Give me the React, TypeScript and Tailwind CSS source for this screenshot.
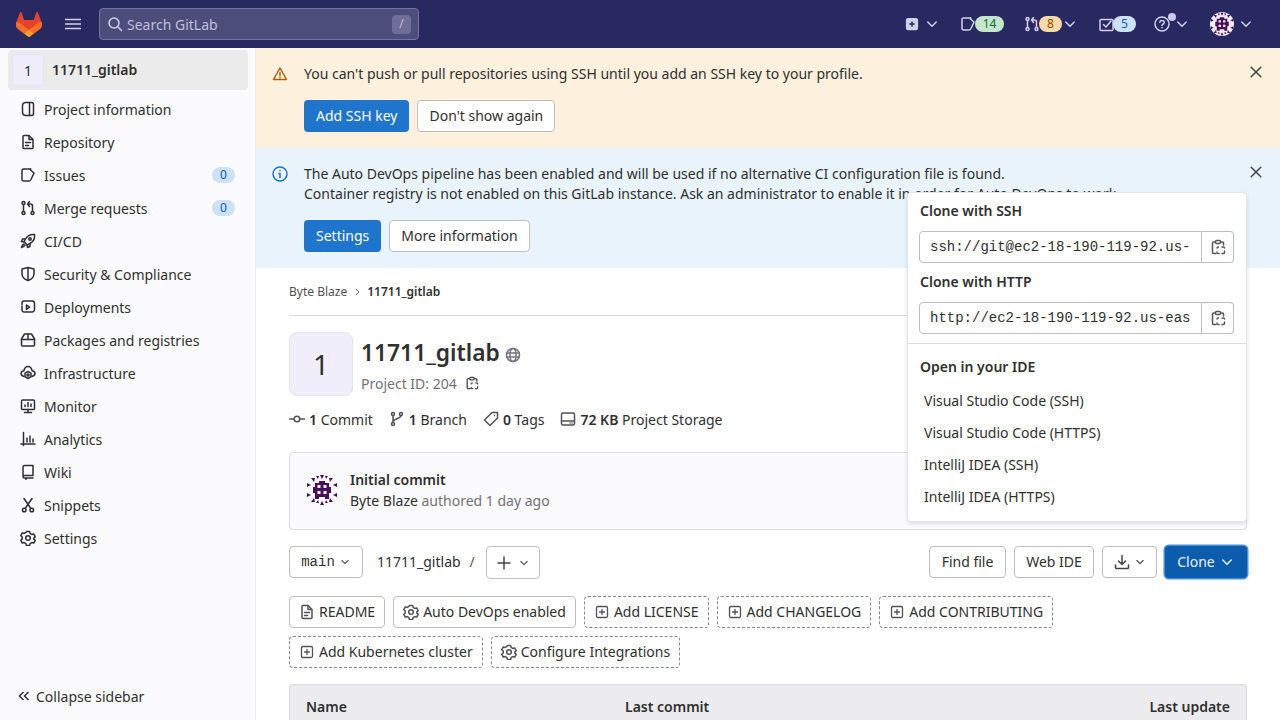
import React from "react";

type P = { className?: string };
const S = ({ className = "", children, fill }: P & { children: React.ReactNode; fill?: boolean }) => (
  <svg viewBox="0 0 16 16" fill={fill ? "currentColor" : "none"} stroke={fill ? "none" : "currentColor"} strokeWidth={1.5} strokeLinecap="round" strokeLinejoin="round" className={`shrink-0 ${className || "w-4 h-4"}`}>
    {children}
  </svg>
);

const Chevron = ({ className = "w-4 h-4" }: P) => <S className={className}><path d="M3.800 6 8 10.200 12.200 6" /></S>;
const Close = ({ className = "w-4 h-4" }: P) => <S className={className}><path d="M3.200 3.200l9.600 9.600M12.800 3.200l-9.600 9.600" /></S>;
const ProjectIc = () => <S><path d="M6 1.500h5.500a2 2 0 0 1 2 2v9a2 2 0 0 1-2 2H6c-2 0-3.500-1.500-3.500-3.200V4.700C2.500 3 4 1.500 6 1.500Z" /><path d="M9.500 2v12" /></S>;
const DocIc = ({ className }: P) => <S className={className}><path d="M3 2.500a1 1 0 0 1 1-1h5l4 4v8a1 1 0 0 1-1 1H4a1 1 0 0 1-1-1Z" /><path d="M9 2v3.500h3.500M5.500 8.500h5M5.500 11.500h3" /></S>;
const IssueIc = ({ className }: P) => <S className={className}><path d="M10.500 2H3.500a1.500 1.500 0 0 0-1.500 1.500v9A1.500 1.500 0 0 0 3.500 14h5.500c1 0 1.500-.5 2-1.500l3-6.500-3.500-3Z" /><path d="M10.500 2v.5" /></S>;
const MergeIc = ({ className }: P) => <S className={className}><circle cx="3.500" cy="3" r="1.500" /><circle cx="3.500" cy="13" r="1.500" /><circle cx="12.500" cy="13" r="1.500" /><path d="M3.500 4.500v7M12.500 11.500V6a2 2 0 0 0-2-2H8M9.500 1.500 7.500 4l2 2.500" /></S>;
const RocketIc = () => <S><path d="M14.500 1.500c-4-.5-7 1-9 4.500L4 8.500 7.500 12l2.500-1.500c3.500-2 5-5 4.500-9Z" /><circle cx="10" cy="6" r="1.200" /><path d="M5 6H2.500L1.500 8.500 4 9M10 11v2.500L7.500 14.500 7 12M4 11c-1.500.5-2 1.500-2.500 3.500 2-.5 3-1 3.500-2.500" /></S>;
const ShieldIc = () => <S><path d="M8 1.500 2 3v4.500c0 3.500 2.500 6 6 7 3.500-1 6-3.500 6-7V3Z" /><path d="M8 2v12" /></S>;
const DeployIc = () => <S><path d="M2 6V4a2 2 0 0 1 2-2h8a2.500 2.500 0 0 1 2.500 2.500v6a2.500 2.500 0 0 1-2.500 2.500H4a2 2 0 0 1-2-1.500" /><path d="M2 7.500v3" /><path d="M6.500 6 9.500 8.200 6.500 10.500Z" /></S>;
const PackageIc = () => <S><path d="M1.500 7 4.500 2h7l3 5v6a1 1 0 0 1-1 1h-11a1 1 0 0 1-1-1Z" /><path d="M1.500 7.500h13M8 2v5.500" /></S>;
const InfraIc = () => <S><path d="M4 5.500C4.500 3 6 1.500 8 1.500S11.500 3 12 5.500c1.500.5 3 1.500 3 3s-1.500 2.500-3 3M4 11.500c-1.500-.5-3-1.500-3-3s1.500-2.500 3-3" /><path d="M8 6.500l3 1.700v3.400l-3 1.900-3-1.900V8.200Z" /><circle cx="8" cy="10" r="1" /></S>;
const MonitorIc = () => <S><rect x="1.500" y="2" width="13" height="9.500" rx="1" /><path d="M8 11.500V14M4.500 14.500h7M5 8.500V7M8 8.500V4.500M11 8.500V6" /></S>;
const AnalyticsIc = () => <S><path d="M3.500 1.500v13M1 13h14M7 11V7M10 11V5M13 11V8" /></S>;
const WikiIc = () => <S><path d="M3 12.500V3a1.500 1.500 0 0 1 1.500-1.500H13v10H4.500C3.500 11.500 3 12 3 12.500Zm0 0c0 1 .5 1.500 1.500 1.500H13M6 14v1.500" /></S>;
const SnippetIc = () => <S><path d="M4 1.500 10.500 11M12 1.500 5.500 11" /><circle cx="4.200" cy="13" r="1.800" /><circle cx="11.800" cy="13" r="1.800" /></S>;
const GearIc = ({ className }: P) => <S className={className}><path d="M6.400 1.500h3.200l.5 1.900 1.700 1 1.900-.5 1.500 2.700-1.400 1.400v1l1.400 1.400-1.500 2.700-1.900-.5-1.700 1-.5 1.900H6.400l-.5-1.900-1.700-1-1.900.5L.8 10.400l1.400-1.400v-2L.8 5.600l1.500-2.700 1.900.5 1.700-1Z" /><circle cx="8" cy="8" r="2.300" /></S>;
const CopyIc = ({ className = "w-4 h-4" }: P) => <S className={className}><path d="M4.500 3H3.500A1 1 0 0 0 2.500 4v9.500a1 1 0 0 0 1 1H6M11.500 3h1a1 1 0 0 1 1 1v2" /><rect x="5.500" y="1.500" width="5" height="3" rx="1" /><path d="M8.500 8h-.5a1 1 0 0 0-1 1M12 8h1.500a1 1 0 0 1 1 1M14.500 12v1.500a1 1 0 0 1-1 1H12M9 14.500H8a1 1 0 0 1-1-1V13" strokeWidth={1.4} /></S>;
const AddBoxIc = () => <S className="w-4 h-4 text-[#535158]"><rect x="2.500" y="2.500" width="11" height="11" rx="1.500" strokeWidth={1.3} /><path d="M8 5.500v5M5.500 8h5" strokeWidth={1.3} /></S>;

function Identicon({ className }: P) {
  const c = "#4a0f5c";
  return (
    <svg viewBox="0 0 32 32" className={className}>
      <path d="M9 9h4V7h6v2h4v4h2v6h-2v6h-4v-2h-6v2H9v-6H7v-6h2Z" fill={c} />
      <rect x="11.500" y="11" width="3" height="3" fill="#fff" /><rect x="17.500" y="11" width="3" height="3" fill="#fff" />
      <rect x="11.500" y="17" width="3" height="3" fill="#fff" /><rect x="17.500" y="17" width="3" height="3" fill="#fff" />
      <path d="M5 4h4l-1 4ZM27 4h-4l1 4ZM5 28h4l-1-4ZM27 28h-4l1-4ZM14 1h4l-2 4ZM14 31h4l-2-4ZM1 9l4 2-4 2ZM31 9l-4 2 4 2ZM1 19l4 2-4 2ZM31 19l-4 2 4 2ZM10 2h3l-1 3ZM22 2h-3l1 3ZM10 29h3l-1-3ZM22 29h-3l1-3Z" fill={c} />
    </svg>
  );
}

const nav: [string, React.ReactNode, number?][] = [
  ["Project information", <ProjectIc />],
  ["Repository", <DocIc />],
  ["Issues", <IssueIc />, 0],
  ["Merge requests", <MergeIc />, 0],
  ["CI/CD", <RocketIc />],
  ["Security & Compliance", <ShieldIc />],
  ["Deployments", <DeployIc />],
  ["Packages and registries", <PackageIc />],
  ["Infrastructure", <InfraIc />],
  ["Monitor", <MonitorIc />],
  ["Analytics", <AnalyticsIc />],
  ["Wiki", <WikiIc />],
  ["Snippets", <SnippetIc />],
  ["Settings", <GearIc />],
];

function Sidebar() {
  return (
    <aside className="w-[256px] shrink-0 h-[672px] bg-[#fbfafd] border-r border-[#ececef] flex flex-col pl-2 pr-[7px] pt-[2px] text-[14px] text-[#303030]">
      <div className="h-10 rounded bg-[#ebebeb] flex items-center px-1 mb-[3px]">
        <div className="w-8 h-8 rounded bg-[#f0eefa] border border-[#e6e4f2] flex items-center justify-center text-[14px] text-[#303030]">1</div>
        <span className="ml-2 pb-[2px] font-semibold">11711_gitlab</span>
      </div>
      {nav.map(([label, icon, count]) => (
        <div key={label} className="h-8 mb-[1px] flex items-center pl-3 pr-[13px]">
          {icon}
          <span className="ml-2 flex-1">{label}</span>
          {count !== undefined && <span className="w-[23px] h-4 rounded-full bg-[#cbe2f9] text-[#0b5cad] text-[12px] flex items-center justify-center">{count}</span>}
        </div>
      ))}
      <div className="mt-auto h-12 flex items-center pl-2 text-[#303030]">
        <svg viewBox="0 0 16 16" className="w-4 h-4 mr-1" fill="none" stroke="currentColor" strokeWidth={1.5}><path d="M7.500 4 3.500 8l4 4M12.500 4l-4 4 4 4" /></svg>
        <span>Collapse sidebar</span>
      </div>
    </aside>
  );
}

function Btn({ children, primary, className = "" }: { children: React.ReactNode; primary?: boolean; className?: string }) {
  return (
    <div className={`h-8 rounded flex items-center justify-center text-[14px] whitespace-nowrap ${primary ? "px-3 bg-[#1f75cb] text-white" : "px-[11px] bg-white text-[#303030] border border-[#bfbfc3]"} ${className}`}>
      {children}
    </div>
  );
}

function Alert({ bg, icon, close, lines, actions, className }: { bg: string; icon: React.ReactNode; close?: boolean; lines: string[]; actions: React.ReactNode; className: string }) {
  return (
    <div className={`flex pl-4 pr-4 ${bg} ${className}`}>
      <div className="w-8 pt-[2px]">{icon}</div>
      <div className="flex-1 min-w-0 text-[14px] leading-5 text-[#303030]">
        {lines.map((l) => <div key={l} className="whitespace-nowrap">{l}</div>)}
        <div className="flex gap-2 mt-4">{actions}</div>
      </div>
      {close && <Close className="w-4 h-4 text-[#444]" />}
    </div>
  );
}

function ActionPill({ icon, label, dashed }: { icon: React.ReactNode; label: string; dashed?: boolean }) {
  return (
    <div className={`h-8 px-[9px] pb-[1px] rounded flex items-center gap-1 text-[14px] text-[#303030] whitespace-nowrap border ${dashed ? "border-dashed border-[#89888d]" : "border-[#bfbfc3]"}`}>
      {icon}
      <span>{label}</span>
    </div>
  );
}

function CloneField({ value }: { value: string }) {
  return (
    <div className="h-8 flex ml-[11px] mr-3">
      <div className="flex-1 min-w-0 border border-[#bfbfc3] rounded-l pl-[10px] pr-[10px] flex items-center">
        <div className="overflow-hidden whitespace-nowrap font-['Liberation_Mono',monospace] text-[14px] text-[#303030]">{value}</div>
      </div>
      <div className="w-8 border border-l-0 border-[#bfbfc3] rounded-r flex items-center justify-center text-[#555]"><CopyIc /></div>
    </div>
  );
}

function CloneMenu() {
  return (
    <div className="absolute right-0 bottom-full mb-[24px] w-[340px] h-[330px] bg-white border border-[#e5e5e8] rounded shadow-[0_2px_4px_rgba(0,0,0,0.12)] text-[14px] text-[#303030] z-10 flex flex-col">
      <div className="font-semibold px-3 pt-[8px] h-[38px] leading-5">Clone with SSH</div>
      <CloneField value="ssh://git@ec2-18-190-119-92.us-east-2.compute" />
      <div className="font-semibold px-3 pt-[9px] h-[39px] leading-5">Clone with HTTP</div>
      <CloneField value="http://ec2-18-190-119-92.us-east-2.compute" />
      <div className="h-px bg-[#dcdcde] mt-[9px]" />
      <div className="font-semibold px-3 pt-[13px] h-[40px] leading-5">Open in your IDE</div>
      {["Visual Studio Code (SSH)", "Visual Studio Code (HTTPS)", "IntelliJ IDEA (SSH)", "IntelliJ IDEA (HTTPS)"].map((t) => (
        <div key={t} className="h-8 px-4 flex items-center">{t}</div>
      ))}
    </div>
  );
}

function Header() {
  return (
    <header className="h-12 bg-[#292961] flex items-center text-[#d1d0e8] shrink-0">
      <svg viewBox="0 0 25 24" className="w-[26px] h-[25px] ml-4">
        <path d="m24.507 9.5-.034-.09L21.082.562a.896.896 0 0 0-1.694.091l-2.29 7.01H7.825L5.535.653a.898.898 0 0 0-1.694-.09L.451 9.411.416 9.5a6.297 6.297 0 0 0 2.09 7.278l.012.01.03.022 5.16 3.867 2.56 1.935 1.554 1.176a1.051 1.051 0 0 0 1.268 0l1.555-1.176 2.56-1.935 5.197-3.89.014-.01A6.297 6.297 0 0 0 24.507 9.5Z" fill="#e24329" />
        <path d="m24.507 9.5-.034-.09a11.44 11.44 0 0 0-4.56 2.051l-7.447 5.632 4.742 3.584 5.197-3.89.014-.01A6.297 6.297 0 0 0 24.507 9.5Z" fill="#fc6d26" />
        <path d="m7.707 20.677 2.56 1.935 1.555 1.176a1.051 1.051 0 0 0 1.268 0l1.555-1.176 2.56-1.935-4.743-3.584-4.755 3.584Z" fill="#fca326" />
        <path d="M5.01 11.461a11.43 11.43 0 0 0-4.56-2.05L.416 9.5a6.297 6.297 0 0 0 2.09 7.278l.012.01.03.022 5.16 3.867 4.745-3.584-7.444-5.632Z" fill="#fc6d26" />
      </svg>
      <svg viewBox="0 0 16 16" className="w-4 h-4 ml-[23px]" fill="none" stroke="currentColor" strokeWidth={1.5}><path d="M0 3.500h16M0 8h16M0 12.500h16" /></svg>
      <div className="ml-[18px] w-[320px] h-8 rounded bg-[#4d4d7b] border border-[#7473a0] flex items-center pl-[7px] pr-[7px] text-[14px]">
        <S className="w-4 h-4 text-[#d1d0e8]"><circle cx="7" cy="7" r="5" /><path d="m11 11 3.500 3.500" /></S>
        <span className="ml-[4px] text-[#c0bfdc] flex-1">Search GitLab</span>
        <span className="w-[19px] h-[19px] rounded-sm bg-[#6e6e96] text-[#c0bfdc] text-[12px] flex items-center justify-center">/</span>
      </div>
      <div className="ml-auto flex items-center pr-[26px]">
        <svg viewBox="0 0 16 16" className="w-[14px] h-[14px]"><rect width="14" height="14" x="1" y="1" rx="2.500" fill="#d1d0e8" /><path d="M8 5v6M5 8h6" stroke="#292961" strokeWidth={1.800} /></svg>
        <Chevron className="w-4 h-4 ml-[5px]" />
        <IssueIc className="w-4 h-4 ml-[20px]" />
        <span className="w-[29px] h-4 -ml-px rounded-full bg-[#c3e6cd] text-[#24663b] text-[12px] flex items-center justify-center">14</span>
        <MergeIc className="w-4 h-4 ml-[20px]" />
        <span className="w-[23px] h-4 -ml-px rounded-full bg-[#f5d9a8] text-[#8f4700] text-[12px] flex items-center justify-center">8</span>
        <Chevron className="w-4 h-4" />
        <S className="w-4 h-4 ml-[20px]"><path d="M14 3.500H3a1 1 0 0 0-1 1v9a1 1 0 0 0 1 1h11a1 1 0 0 0 1-1V4" /><path d="m5.500 8.500 2.500 2.500 5-6" /></S>
        <span className="w-[23px] h-4 -ml-px rounded-full bg-[#cbe2f9] text-[#0b5cad] text-[12px] flex items-center justify-center">5</span>
        <span className="relative ml-[18px] w-4 h-4">
          <S className="w-4 h-4"><circle cx="8" cy="8" r="7" /><path d="M5.800 6.200A2.200 2.200 0 0 1 8 4.500c1.300 0 2.200.8 2.200 1.900 0 1.600-2.200 1.800-2.200 3.200" /><path d="M8 11.500v.2" /></S>
          <span className="absolute -top-[3px] -right-[6px] w-2 h-2 rounded-full bg-[#c9c8ef]" />
        </span>
        <Chevron className="w-4 h-4 ml-1" />
        <span className="ml-[20px] w-6 h-6 rounded-full bg-[#f3eef6] overflow-hidden"><Identicon className="w-6 h-6" /></span>
        <Chevron className="w-4 h-4 ml-1" />
      </div>
    </header>
  );
}

function Main() {
  return (
    <main className="flex-1 min-w-0 h-[672px] overflow-hidden bg-white">
      <Alert
        bg="bg-[#fdf1dd]"
        className="h-[100px] pt-[16px]"
        close
        icon={<S className="w-4 h-4 text-[#ab6100]"><path d="M8 2 1.500 13.500h13Z" /><path d="M8 6.500v3.500M8 11.800v.2" /></S>}
        lines={["You can't push or pull repositories using SSH until you add an SSH key to your profile."]}
        actions={<><Btn primary>Add SSH key</Btn><Btn>Don't show again</Btn></>}
      />
      <Alert
        bg="bg-[#e9f3fc]"
        className="h-[120px] pt-[16px]"
        close
        icon={<S className="w-4 h-4 text-[#1f75cb]"><circle cx="8" cy="8" r="7" /><path d="M8 7.500v4M6.800 7.500H8M8 4.500v.2" /></S>}
        lines={["The Auto DevOps pipeline has been enabled and will be used if no alternative CI configuration file is found.", "Container registry is not enabled on this GitLab instance. Ask an administrator to enable it in order for Auto DevOps to work."]}
        actions={<><Btn primary>Settings</Btn><Btn>More information</Btn></>}
      />
      <div className="px-[33px] text-[14px] text-[#303030]">
        <div className="h-[48px] border-b border-[#dcdcde] flex items-center text-[12px] text-[#535158]">
          <span>Byte Blaze</span>
          <svg viewBox="0 0 16 16" className="w-2.5 h-2.5 mx-[5px]" fill="none" stroke="currentColor" strokeWidth={1.500}><path d="m6 3 5 5-5 5" /></svg>
          <span className="font-semibold text-[#303030]">11711_gitlab</span>
        </div>
        <div className="flex mt-4">
          <div className="w-16 h-16 rounded-lg bg-[#f0eefa] border border-[#e6e4f2] flex items-center justify-center text-[28px] text-[#303030]">1</div>
          <div className="ml-2">
            <div className="flex items-center h-[42px]">
              <span className="text-[22.8px] font-semibold leading-8">11711_gitlab</span>
              <S className="w-4 h-4 ml-[5px] text-[#737278] mt-[3px]"><circle cx="8" cy="8" r="6.500" /><ellipse cx="8" cy="8" rx="3" ry="6.500" /><path d="M2 6h12M2 10h12" /></S>
            </div>
            <div className="flex items-center text-[#737278] h-5 -mt-[1px]">
              <span>Project ID: 204</span>
              <CopyIc className="w-[14px] h-[14px] ml-2 text-[#444]" />
            </div>
          </div>
        </div>
        <div className="flex items-center h-5 mt-[13px] text-[#303030]">
          <S className="w-4 h-4 text-[#535158]"><circle cx="8" cy="8" r="2.800" /><path d="M.5 8h4.500M11 8h4.500" /></S>
          <span className="ml-1"><b className="font-semibold">1</b> Commit</span>
          <S className="w-4 h-4 ml-4 text-[#535158]"><circle cx="4" cy="3" r="1.500" /><circle cx="12" cy="3" r="1.500" /><circle cx="4" cy="13" r="1.500" /><path d="M4 4.500v7M12 4.500C12 8 4 7.500 4 11" /></S>
          <span className="ml-1"><b className="font-semibold">1</b> Branch</span>
          <S className="w-4 h-4 ml-4 text-[#535158]"><path d="M9 1.500h5.500V7l-7.500 7.500L1.500 9Z" /><path d="M11.500 4.500v.1" /></S>
          <span className="ml-1"><b className="font-semibold">0</b> Tags</span>
          <S className="w-4 h-4 ml-4 text-[#535158]"><rect x="1.500" y="2" width="13" height="12" rx="1.500" /><path d="M1.500 10h13M10 12h.1M12 12h.1" /></S>
          <span className="ml-1"><b className="font-semibold">72 KB</b> Project Storage</span>
        </div>
        <div className="h-[78px] mt-[23px] rounded bg-[#fbfafd] border border-[#dcdcde] flex items-center pl-4 pb-[2px]">
          <Identicon className="w-8 h-8" />
          <div className="ml-3">
            <div className="font-semibold leading-5">Initial commit</div>
            <div className="leading-5 mt-[1px]">Byte Blaze <span className="text-[#737278]">authored 1 day ago</span></div>
          </div>
        </div>
        <div className="flex items-start mt-4 h-8">
          <div className="h-8 w-[74px] rounded border border-[#bfbfc3] flex items-center justify-center gap-1">
            <span className="font-['Liberation_Mono',monospace]">main</span>
            <Chevron className="w-3 h-3 text-[#555]" />
          </div>
          <span className="ml-[14px] leading-8">11711_gitlab</span>
          <span className="ml-[9px] leading-8 text-[#535158]">/</span>
          <div className="ml-[11px] h-[33px] w-[54px] rounded border border-[#bfbfc3] flex items-center justify-center gap-[6px]">
            <S className="w-4 h-4 text-[#444]"><path d="M8 2v12M2 8h12" /></S>
            <Chevron className="w-3 h-3 text-[#555]" />
          </div>
          <div className="ml-auto flex items-center gap-2">
            <Btn className="w-[77px] pb-[2px]">Find file</Btn>
            <Btn className="w-[80px] pb-[2px]">Web IDE</Btn>
            <div className="h-8 w-[55px] rounded border border-[#bfbfc3] flex items-center justify-center gap-1 text-[#444]">
              <S className="w-4 h-4"><path d="M8 1.500v8.500M4.500 7 8 10.500 11.500 7M1.500 11v2.500a1 1 0 0 0 1 1h11a1 1 0 0 0 1-1V11" /></S>
              <Chevron className="w-3 h-3" />
            </div>
            <div className="relative">
              <CloneMenu />
              <div className="h-8 w-[82px] pb-[1px] rounded bg-[#0b5cad] text-[#e9f3fc] ring-[1.5px] ring-[#428fdc] flex items-center justify-center gap-1">
                <span>Clone</span>
                <Chevron className="w-4 h-4" />
              </div>
            </div>
          </div>
        </div>
        <div className="flex flex-wrap gap-x-2 gap-y-2 mt-[18px]">
          <ActionPill icon={<DocIc className="w-4 h-4 text-[#535158]" />} label="README" />
          <ActionPill icon={<GearIc className="w-4 h-4 text-[#535158]" />} label="Auto DevOps enabled" />
          <ActionPill dashed icon={<AddBoxIc />} label="Add LICENSE" />
          <ActionPill dashed icon={<AddBoxIc />} label="Add CHANGELOG" />
          <ActionPill dashed icon={<AddBoxIc />} label="Add CONTRIBUTING" />
          <ActionPill dashed icon={<AddBoxIc />} label="Add Kubernetes cluster" />
          <ActionPill dashed icon={<GearIc className="w-4 h-4 text-[#535158]" />} label="Configure Integrations" />
        </div>
        <div className="h-[60px] mt-[16px] bg-[#ececef] border border-[#dcdcde] rounded-t flex items-start pt-[11px] font-semibold px-4">
          <span className="w-[319px]">Name</span>
          <span>Last commit</span>
          <span className="ml-auto">Last update</span>
        </div>
      </div>
    </main>
  );
}

export default function App() {
  return (
    <div className="w-[1280px] h-[720px] overflow-hidden flex flex-col bg-white font-['Noto_Sans',sans-serif]">
      <Header />
      <div className="flex flex-1 min-h-0">
        <Sidebar />
        <Main />
      </div>
    </div>
  );
}
